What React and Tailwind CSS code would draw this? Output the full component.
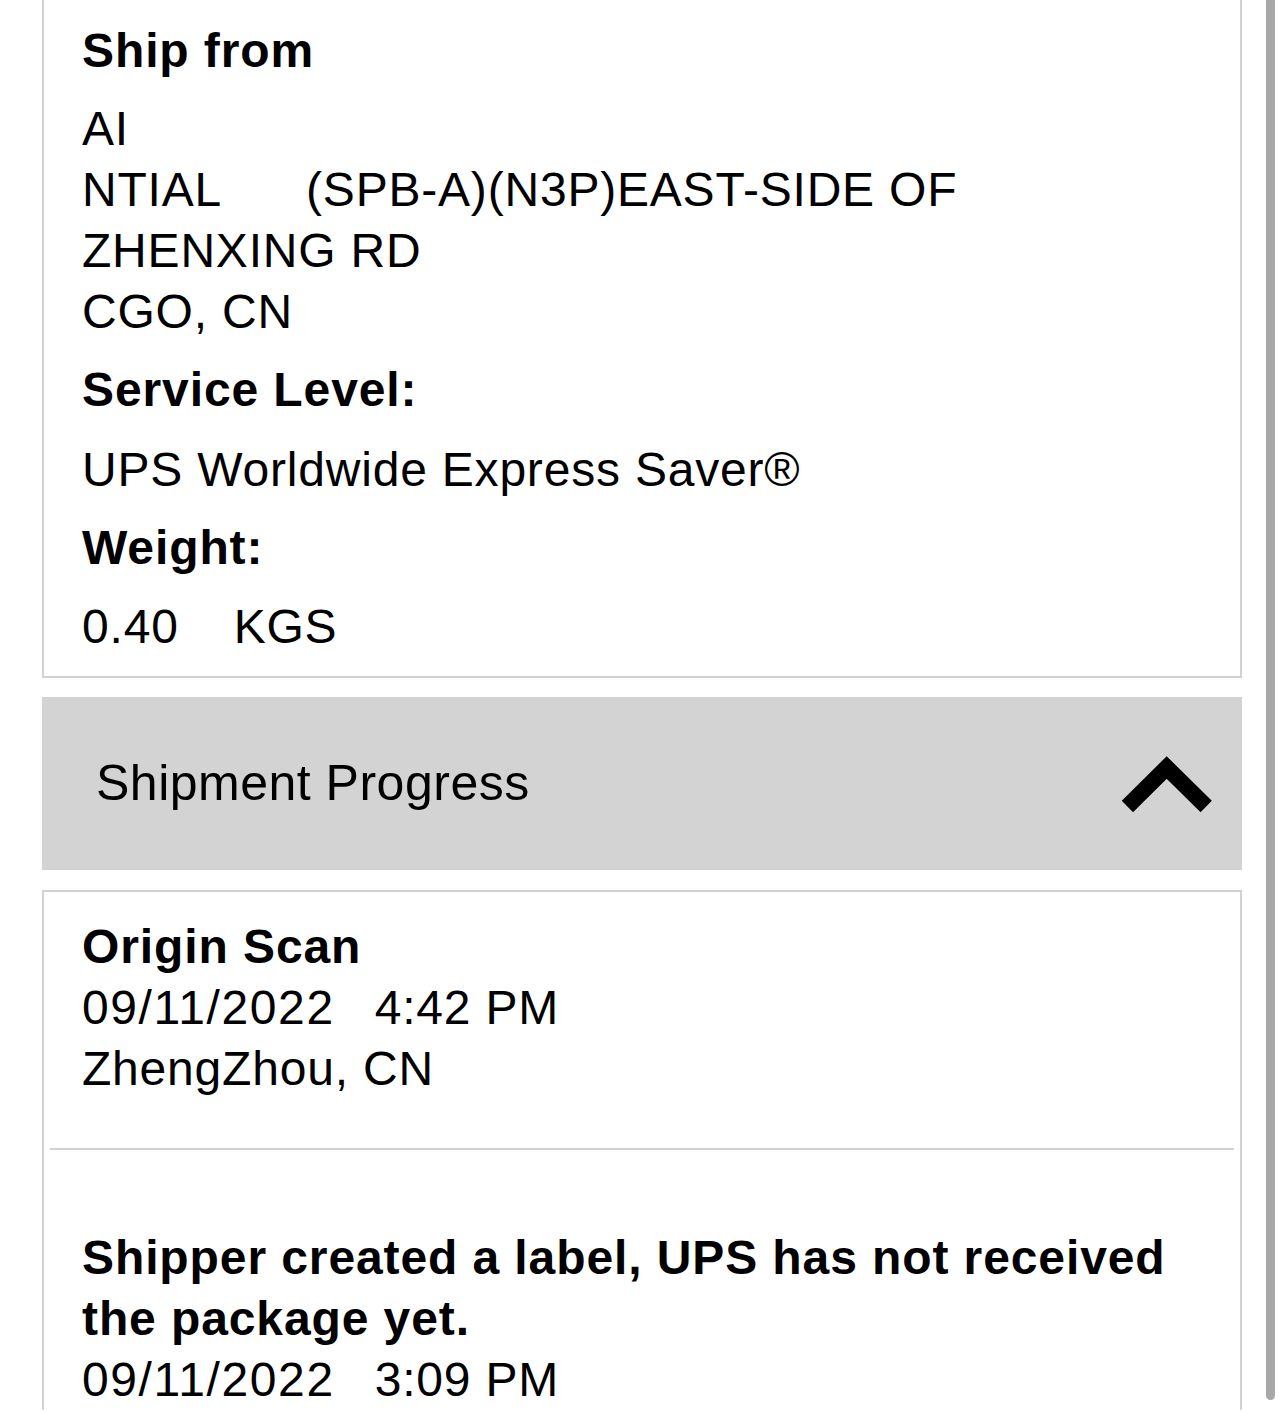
import React from 'react'

const Heading = ({ children, className = '' }) => (
    <div className={`font-bold text-[48px] leading-[61px] tracking-[0.9px] ${className}`}>{children}</div>
)

const Line = ({ children, className = '' }) => (
    <div className={`text-[48px] leading-[61px] tracking-[0.8px] ${className}`}>{children}</div>
)

const DateLine = ({ date, time }) => (
    <div className="text-[48px] leading-[61px] tracking-[1.6px]">
        {date}<span className="ml-[40px] tracking-[0.8px]">{time}</span>
    </div>
)

const Chevron = () => (
    <svg width="96" height="64" viewBox="0 0 96 64" className="shrink-0">
        <polyline
            points="8.4,54.5 47.7,15.5 87.2,54.5"
            fill="none"
            stroke="#000"
            strokeWidth="16"
            strokeLinecap="butt"
            strokeLinejoin="miter"
        />
    </svg>
)

const App = () => {
    return (
        <div
            className="relative w-[1284px] h-[1413px] overflow-hidden bg-white text-black"
            style={{ fontFamily: '"Liberation Sans", Arial, sans-serif' }}
        >
            <div className="px-[42px]">
                {/* shipment details card */}
                <div className="border-x-2 border-b-2 border-[#d2d2d2] pl-[38px] pr-[37px] pt-[20px] pb-[19px]">
                    <Heading className="mb-[17px]">Ship from</Heading>
                    <Line>AI</Line>
                    <Line>
                        NTIAL<span className="ml-[84px]">(SPB-A)(N3P)EAST-SIDE OF</span>
                    </Line>
                    <Line>ZHENXING RD</Line>
                    <Line>CGO, CN</Line>

                    <Heading className="mt-[17px] mb-[19px]">Service Level:</Heading>
                    <Line>UPS Worldwide Express Saver®</Line>

                    <Heading className="mt-[17px] mb-[18px]">Weight:</Heading>
                    <Line>
                        0.40<span className="ml-[55px]">KGS</span>
                    </Line>
                </div>

                {/* progress header */}
                <div className="mt-[19px] h-[173px] bg-[#d3d3d3] flex items-center justify-between pl-[54px] pr-[27px]">
                    <span className="text-[50px] leading-[61px] tracking-[0.5px]">Shipment Progress</span>
                    <Chevron />
                </div>

                {/* progress events */}
                <div className="mt-[20px] border-x-2 border-t-2 border-[#d2d2d2]">
                    <div className="pl-[38px] pr-[37px] pt-[24px] pb-[49px]">
                        <Heading>Origin Scan</Heading>
                        <DateLine date="09/11/2022" time="4:42 PM" />
                        <Line>ZhengZhou, CN</Line>
                    </div>
                    <div className="mx-[6px] h-[2px] bg-[#d3d2cf]" />
                    <div className="pl-[38px] pr-[37px] pt-[77px]">
                        <Heading>
                            Shipper created a label, UPS has not received
                            <br />
                            the package yet.
                        </Heading>
                        <DateLine date="09/11/2022" time="3:09 PM" />
                    </div>
                </div>
            </div>

            {/* scroll indicator */}
            <div className="absolute right-[9px] top-0 w-[9px] h-[1400px] rounded-b-full bg-[#a8a8a8]" />
        </div>
    )
}

export default App
